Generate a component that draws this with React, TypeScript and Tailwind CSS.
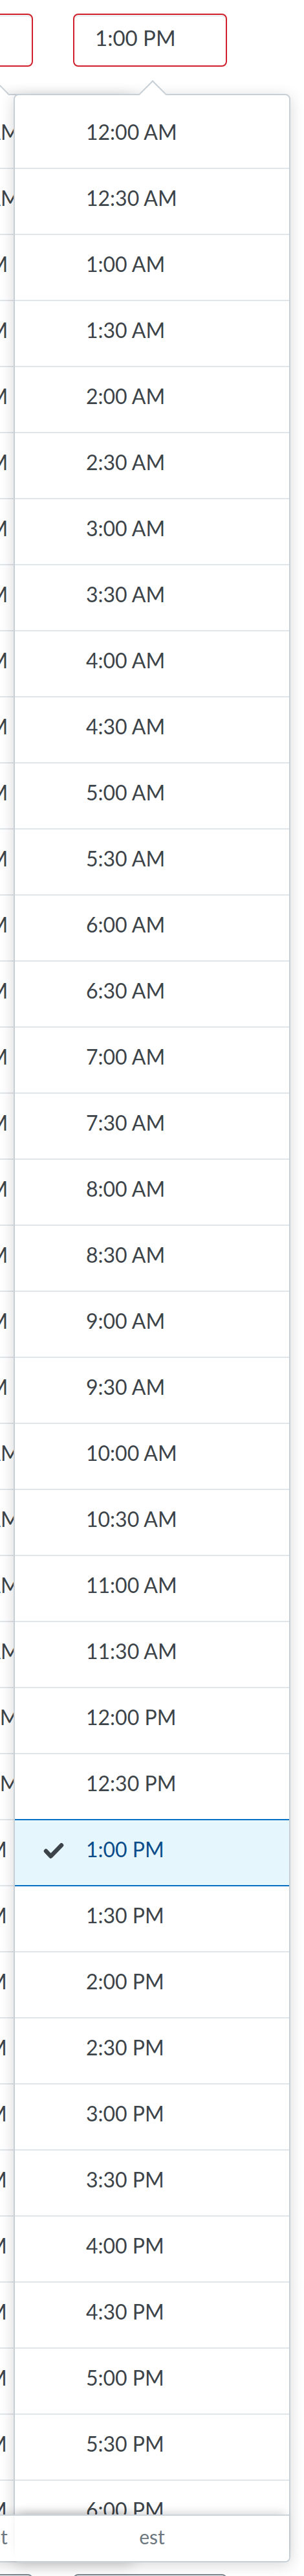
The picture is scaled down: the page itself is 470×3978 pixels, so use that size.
import React from "react";

const label = (i: number) => {
    const h = Math.floor(i / 2);
    const hh = h % 12 === 0 ? 12 : h % 12;
    return `${hh}:${i % 2 ? "30" : "00"} ${h < 12 ? "AM" : "PM"}`;
};

const times = Array.from({ length: 48 }, (_, i) => label(i));

function TimeInput({ value, muted }: { value: string; muted?: boolean }) {
    return (
        <div
            className={`w-[238px] h-[82px] shrink-0 rounded-[8px] border-2 bg-white flex items-center pl-[32px] pb-[6px] text-[33px] text-[#3d4449] shadow-[inset_0_3px_0_#edf0f2] ${
                muted ? "border-[#7d8891]" : "border-[#d0212b]"
            }`}
        >
            {value}
        </div>
    );
}

function Check() {
    return (
        <svg width="32" height="26" viewBox="0 0 32 26" fill="none">
            <path
                d="M4 13.5 L11.5 21.5 L28 4.5"
                stroke="#3d4449"
                strokeWidth="6.5"
                strokeLinecap="round"
                strokeLinejoin="round"
            />
        </svg>
    );
}

function TimePopover({ className, selected }: { className: string; selected?: number }) {
    return (
        <div
            className={`absolute w-[428px] h-[3812px] rounded-[8px] border-2 border-[#c8d0d7] bg-white flex flex-col shadow-[0_4px_22px_rgba(0,0,0,0.16)] ${className}`}
        >
            {/* arrow */}
            <div className="absolute left-[198px] top-[-17px] w-[30px] h-[30px] rotate-45 bg-white border-t-2 border-l-2 border-[#c8d0d7]" />

            <div className="flex-1 overflow-hidden rounded-t-[6px] pt-[10px]">
                {times.map((t, i) => {
                    const isSel = i === selected;
                    const blueTop = selected !== undefined && (i === selected || i === selected + 1);
                    return (
                        <div
                            key={t}
                            className={`h-[102px] border-t-2 flex items-start pt-[26px] pl-[44px] ${
                                i === 0 ? "border-transparent" : blueTop ? "border-[#0770c2]" : "border-[#e1e6eb]"
                            } ${isSel ? "bg-[#e6f6fd]" : ""}`}
                        >
                            <div className="w-[66px] h-[38px] flex items-center pt-[4px]">
                                {isSel && <Check />}
                            </div>
                            <span
                                className={`text-[32px] leading-[38px] ${
                                    isSel ? "text-[#0b4d8a]" : "text-[#3d4449]"
                                }`}
                            >
                                {t}
                            </span>
                        </div>
                    );
                })}
            </div>

            {/* footer */}
            <div className="relative z-10 h-[72px] shrink-0 border-t-2 border-[#cdd5dc] bg-white rounded-b-[6px] flex justify-center pt-[14px] shadow-[0_-8px_14px_-6px_rgba(0,0,0,0.18)]">
                <span className="text-[30px] leading-[36px] text-[#6c7780]">est</span>
            </div>
        </div>
    );
}

export default function App() {
    return (
        <div className="relative w-[470px] h-[3978px] overflow-hidden bg-white font-['Lato','Noto_Sans',sans-serif]">
            {/* Top row of time inputs */}
            <div className="flex gap-[62px] pt-[21px] ml-[-187px]">
                <TimeInput value="12:00 PM" />
                <TimeInput value="1:00 PM" />
            </div>

            {/* Next row, mostly covered */}
            <div className="flex gap-[62px] mt-[3872px] ml-[-187px]">
                <TimeInput value="2:00 PM" muted />
                <TimeInput value="3:00 PM" muted />
            </div>

            {/* start time dropdown behind */}
            <TimePopover className="left-[-222px] top-[145px]" />

            {/* end time dropdown */}
            <TimePopover className="left-[21px] top-[145px]" selected={26} />
        </div>
    );
}
